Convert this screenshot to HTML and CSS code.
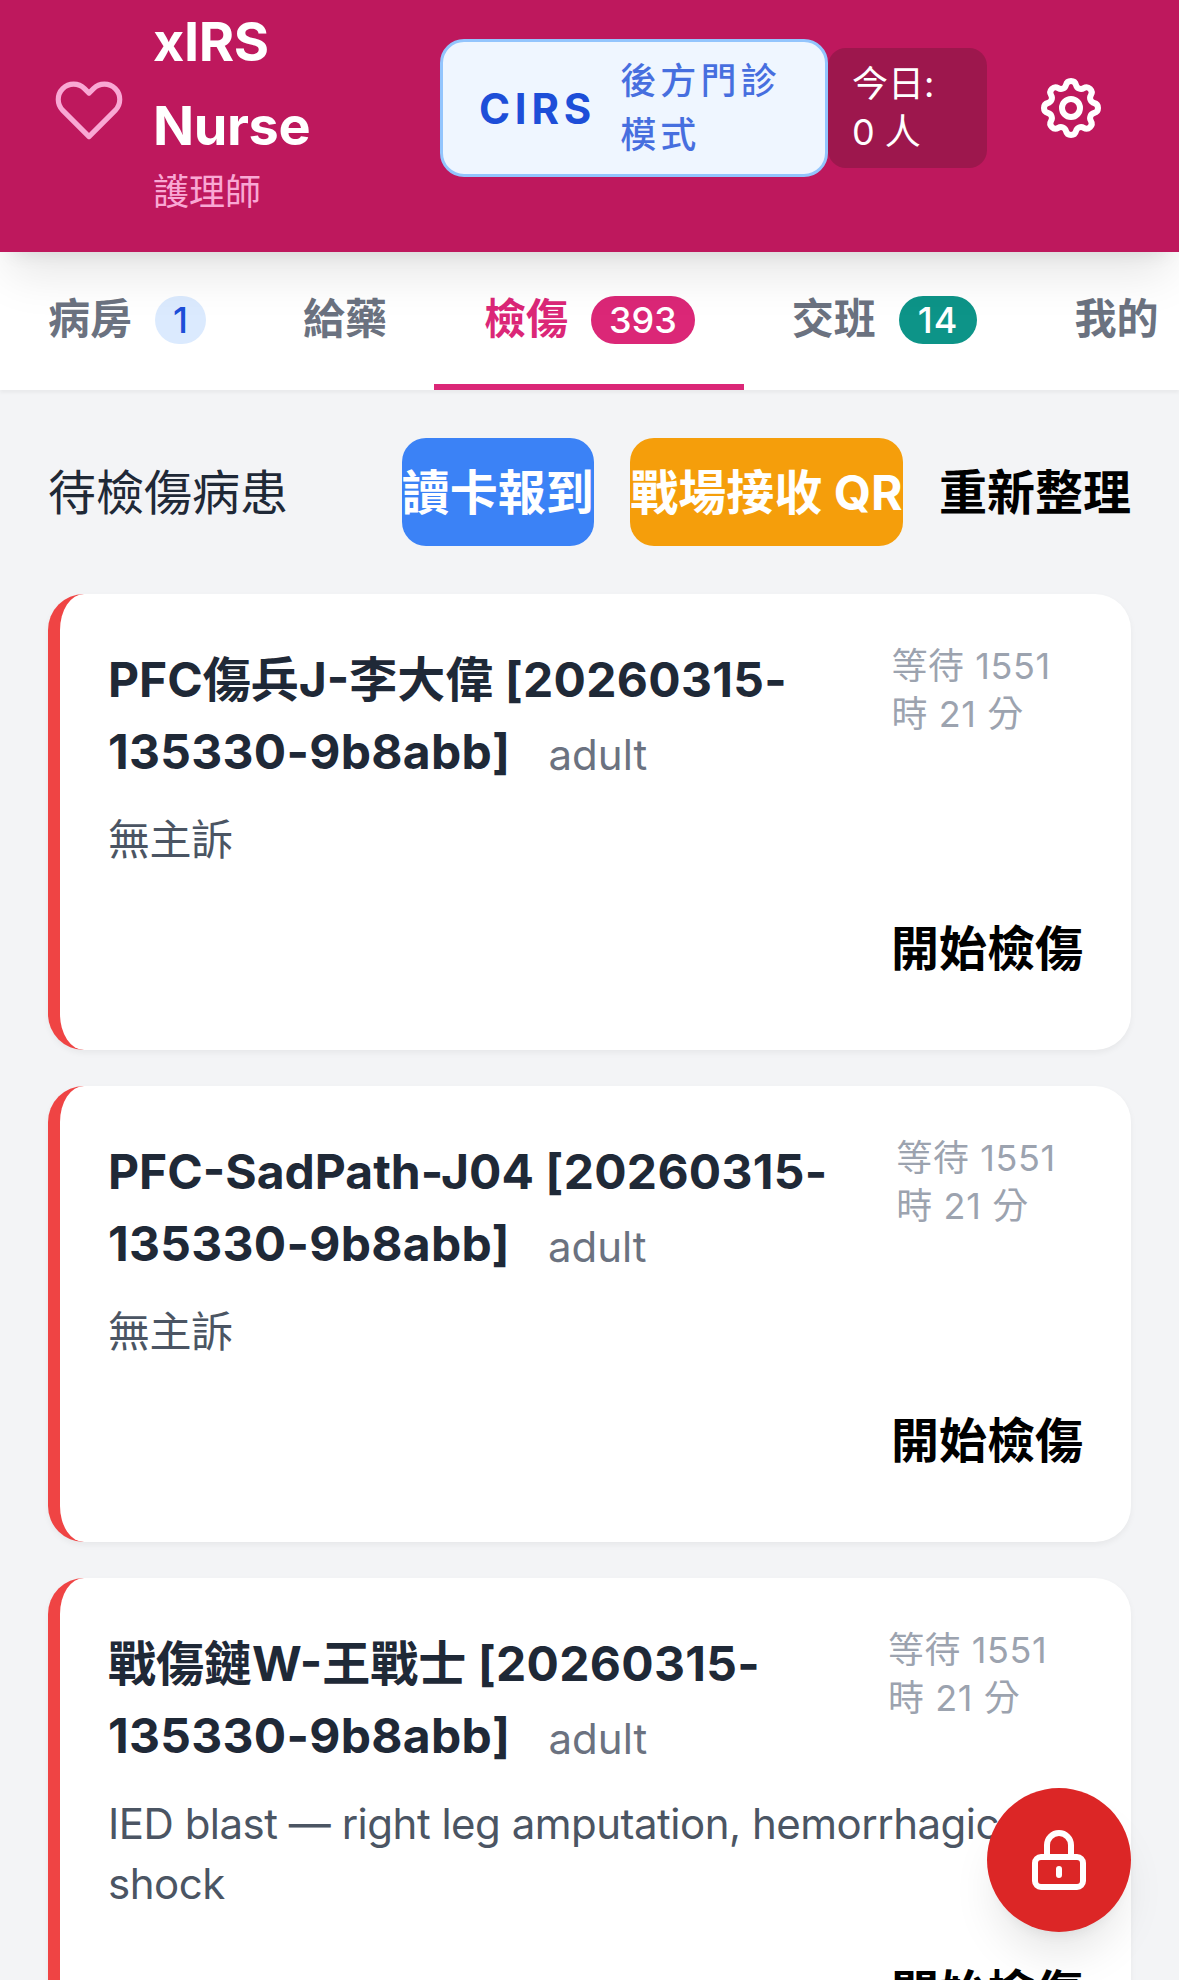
FILE: index.html
```html
<!DOCTYPE html>
<html lang="zh-Hant">
<head>
	<meta charset="UTF-8">
	<title>xIRS Nurse</title>
	<link rel="stylesheet" href="styles.css">
</head>
<body>
	<header class="topbar">
		<svg class="heart" viewBox="0 0 24 24" fill="none" stroke="#f9a8d4" stroke-width="1.5" stroke-linecap="round" stroke-linejoin="round"><path d="M4.318 6.318a4.5 4.5 0 000 6.364L12 20.364l7.682-7.682a4.5 4.5 0 00-6.364-6.364L12 7.636l-1.318-1.318a4.5 4.5 0 00-6.364 0z"/></svg>
		<div class="brand">
			<h1 class="brand_name">xIRS Nurse</h1>
			<div class="brand_role">護理師</div>
		</div>
		<button class="mode">
			<span class="mode_name">CIRS</span>
			<span class="mode_text">後方門診模式</span>
		</button>
		<div class="today">今日: 0 人</div>
		<button class="gear">
			<svg viewBox="0 0 24 24" fill="none" stroke="#fff" stroke-width="2" stroke-linecap="round" stroke-linejoin="round"><path d="M10.325 4.317c.426-1.756 2.924-1.756 3.35 0a1.724 1.724 0 002.573 1.066c1.543-.94 3.31.826 2.37 2.37a1.724 1.724 0 001.065 2.572c1.756.426 1.756 2.924 0 3.35a1.724 1.724 0 00-1.066 2.573c.94 1.543-.826 3.31-2.37 2.37a1.724 1.724 0 00-2.572 1.065c-.426 1.756-2.924 1.756-3.35 0a1.724 1.724 0 00-2.573-1.066c-1.543.94-3.31-.826-2.37-2.37a1.724 1.724 0 00-1.065-2.572c-1.756-.426-1.756-2.924 0-3.35a1.724 1.724 0 001.066-2.573c-.94-1.543.826-3.31 2.37-2.37.996.608 2.296.07 2.572-1.065z"/><path d="M15 12a3 3 0 11-6 0 3 3 0 016 0z"/></svg>
		</button>
	</header>

	<nav class="tabs">
		<a class="tab"><span class="tab_name">病房</span><span class="badge badge_blue">1</span></a>
		<a class="tab"><span class="tab_name">給藥</span></a>
		<a class="tab active"><span class="tab_name">檢傷</span><span class="badge badge_pink">393</span></a>
		<a class="tab"><span class="tab_name">交班</span><span class="badge badge_green">14</span></a>
		<a class="tab"><span class="tab_name">我的</span></a>
	</nav>

	<main class="content">
		<div class="section_head">
			<h2 class="section_title">待檢傷病患</h2>
			<div class="actions">
				<button class="btn btn_blue">讀卡報到</button>
				<button class="btn btn_amber">戰場接收 QR</button>
				<button class="btn">重新整理</button>
			</div>
		</div>

		<div class="card">
			<div class="card_top">
				<div class="card_title">PFC傷兵J-李大偉 <span class="card_no">[20260315-135330-9b8abb]</span><span class="age">adult</span></div>
				<div class="wait">等待 1551 時 21 分</div>
			</div>
			<p class="complaint">無主訴</p>
			<div class="card_foot"><button class="btn">開始檢傷</button></div>
		</div>

		<div class="card">
			<div class="card_top">
				<div class="card_title">PFC-SadPath-J04 <span class="card_no">[20260315-135330-9b8abb]</span><span class="age">adult</span></div>
				<div class="wait">等待 1551 時 21 分</div>
			</div>
			<p class="complaint">無主訴</p>
			<div class="card_foot"><button class="btn">開始檢傷</button></div>
		</div>

		<div class="card">
			<div class="card_top">
				<div class="card_title">戰傷鏈W-王戰士 <span class="card_no">[20260315-135330-9b8abb]</span><span class="age">adult</span></div>
				<div class="wait">等待 1551 時 21 分</div>
			</div>
			<p class="complaint">IED blast — right leg amputation, hemorrhagic shock</p>
			<div class="card_foot"><button class="btn">開始檢傷</button></div>
		</div>
	</main>

	<button class="fab">
		<svg viewBox="0 0 24 24" fill="none" stroke="#fff" stroke-width="2" stroke-linecap="round" stroke-linejoin="round"><path d="M12 15v2m-6 4h12a2 2 0 002-2v-6a2 2 0 00-2-2H6a2 2 0 00-2 2v6a2 2 0 002 2zm10-10V7a4 4 0 00-8 0v4h8z"/></svg>
	</button>
</body>
</html>
```

FILE: styles.css
```css
html,body{
	margin: 0;
	height: 1980px;
	overflow: hidden;
}
body{
	background: #f3f4f6;
	font-family: Inter, "Noto Sans CJK TC", sans-serif;
	color: #1f2937;
}
h1,h2,p{
	margin: 0;
}
button{
	font-family: inherit;
	border: none;
	background: none;
	padding: 0;
}

/* top bar */
.topbar{
	height: 252px;
	box-sizing: border-box;
	padding: 0 48px 36px;
	background: #be185d;
	display: flex;
	align-items: center;
	position: relative;
	z-index: 2;
	box-shadow: 0 30px 45px -9px rgba(0,0,0,0.1), 0 12px 18px -12px rgba(0,0,0,0.1);
}
.heart{
	width: 82px;
	height: 82px;
	flex: none;
	margin-right: 23px;
}
.brand{
	width: 287px;
	flex: none;
}
.brand_name{
	width: 200px;
	font-size: 54px;
	line-height: 84px;
	font-weight: 700;
	letter-spacing: -0.4px;
	color: #fff;
}
.brand_role{
	font-size: 36px;
	line-height: 48px;
	color: #f9a8d4;
}
.mode{
	width: 388px;
	height: 138px;
	flex: none;
	box-sizing: border-box;
	padding: 0 36px;
	display: flex;
	align-items: center;
	gap: 24px;
	background: #eff6ff;
	border: 3px solid #93c5fd;
	border-radius: 24px;
	text-align: left;
}
.mode_name{
	font-size: 42px;
	font-weight: 700;
	letter-spacing: 4.8px;
	color: #1d4ed8;
}
.mode_text{
	flex: 1;
	font-size: 36px;
	font-weight: 500;
	line-height: 54px;
	letter-spacing: 4.2px;
	color: #1d4ed8;
	opacity: 0.8;
}
.today{
	width: 159px;
	flex: none;
	box-sizing: border-box;
	padding: 12px 24px;
	font-size: 36px;
	line-height: 48px;
	color: #fff;
	background: #9d174d;
	border-radius: 18px;
}
.gear{
	flex: none;
	margin-left: 24px;
	padding: 24px;
	height: 120px;
}
.gear svg{
	display: block;
	width: 72px;
	height: 72px;
}

/* tabs */
.tabs{
	height: 138px;
	box-sizing: border-box;
	display: flex;
	background: #fff;
	box-shadow: 0 3px 3px rgba(0,0,0,0.04);
	overflow: hidden;
	white-space: nowrap;
}
.tab{
	flex: none;
	height: 138px;
	box-sizing: border-box;
	padding: 4px 49px 0 48px;
	display: flex;
	align-items: center;
	gap: 23px;
	font-size: 42px;
	font-weight: 600;
	color: #6b7280;
	border-bottom: 6px solid transparent;
}
.tab.active{
	margin-left: -2px;
	padding-left: 50px;
	color: #db2777;
	border-bottom-color: #db2777;
}
/* 中文字比徽章略高一点 */
.tab_name{
	margin-bottom: 10px;
}
.badge{
	font-size: 36px;
	font-weight: 500;
	line-height: 48px;
	padding: 0 18px;
	border-radius: 24px;
}
.badge_blue{
	background: #dbeafe;
	color: #1d4ed8;
}
.badge_pink{
	background: #db2777;
	color: #fff;
}
.badge_green{
	padding: 0 19px;
	background: #0d9488;
	color: #fff;
	letter-spacing: 1px;
}

/* list */
.content{
	padding: 48px 48px 0;
}
.section_head{
	display: flex;
	justify-content: space-between;
	align-items: center;
	margin-bottom: 48px;
}
.section_title{
	font-size: 48px;
	font-weight: 400;
	line-height: 72px;
	padding-top: 2px;
}
.actions{
	display: flex;
	gap: 36px;
}
.btn{
	height: 108px;
	padding: 2px 0 0;
	font-size: 48px;
	font-weight: 700;
	line-height: 72px;
	color: #000;
	border-radius: 24px;
	white-space: nowrap;
}
.btn_blue{
	background: #3b82f6;
	color: #fff;
}
.btn_amber{
	padding: 2px 0.5px 0;
	background: #f59e0b;
	color: #fff;
}
.card{
	background: #fff;
	border-left: 12px solid #ef4444;
	border-radius: 36px;
	padding: 48px;
	margin-bottom: 36px;
	box-shadow: 0 3px 6px rgba(0,0,0,0.05);
}
.card_top{
	display: flex;
	justify-content: space-between;
	gap: 12px;
}
.card_title{
	margin: 2px 0 -2px;
	font-size: 48px;
	font-weight: 700;
	line-height: 72px;
}
.card_no{
	letter-spacing: 0.3px;
}
.age{
	margin-left: 38px;
	font-size: 42px;
	font-weight: 400;
	line-height: 1;
	vertical-align: -1px;
	color: #6b7280;
}
.complaint{
	margin-top: 24px;
	font-size: 42px;
	line-height: 60px;
	letter-spacing: -0.5px;
	color: #4b5563;
}
.wait{
	font-size: 36px;
	line-height: 48px;
	letter-spacing: 0.6px;
	color: #9ca3af;
}
.card_foot{
	margin-top: 24px;
	display: flex;
	justify-content: flex-end;
}

/* lock button */
.fab{
	position: fixed;
	right: 48px;
	bottom: 48px;
	width: 144px;
	height: 144px;
	border-radius: 50%;
	background: #dc2626;
	display: flex;
	align-items: center;
	justify-content: center;
	box-shadow: 0 30px 45px -9px rgba(0,0,0,0.1), 0 12px 18px -12px rgba(0,0,0,0.1);
}
.fab svg{
	width: 72px;
	height: 72px;
}
```
